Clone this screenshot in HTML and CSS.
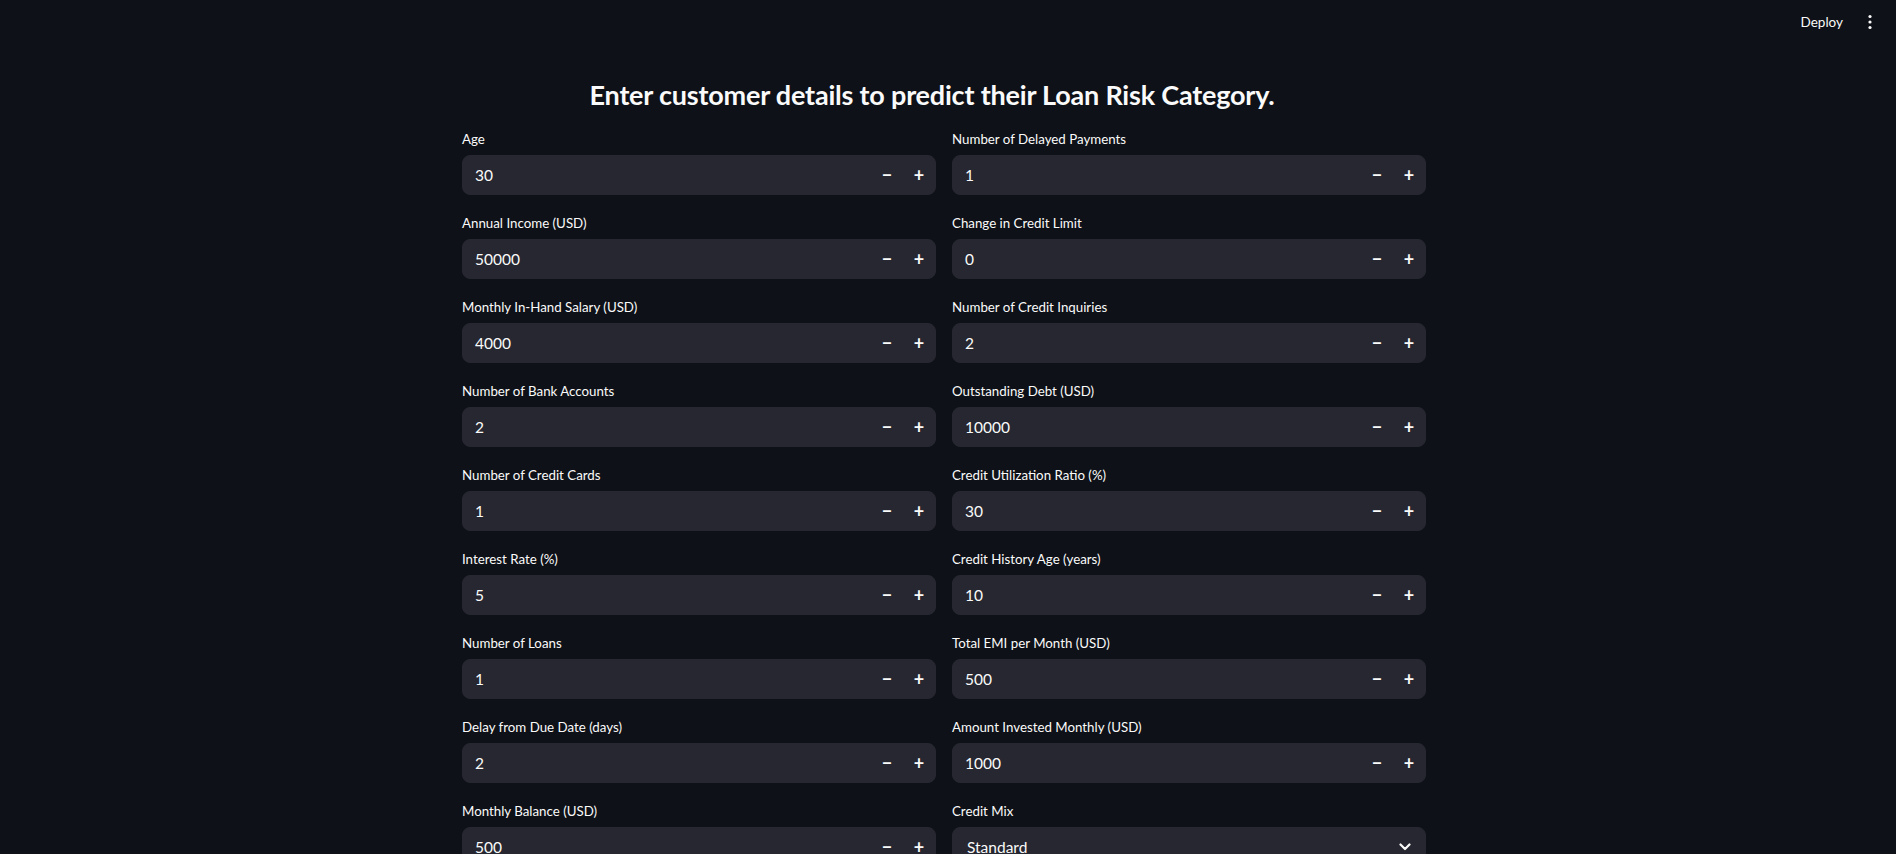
FILE: index.html
```html
<!DOCTYPE html>
<html lang="en">
<head>
<meta charset="utf-8">
<title>Loan Risk Category</title>
<link rel="stylesheet" href="styles.css">
</head>
<body>
<header class="topbar">
  <button class="deploy">Deploy</button>
  <button class="menu" aria-label="Main menu">
    <svg width="16" height="16" viewBox="0 0 16 16"><circle cx="8" cy="2.5" r="1.6" fill="#fafafa"/><circle cx="8" cy="8" r="1.6" fill="#fafafa"/><circle cx="8" cy="13.5" r="1.6" fill="#fafafa"/></svg>
  </button>
</header>
<main class="main">
  <div class="block">
    <h3 class="title">Enter customer details to predict their Loan Risk Category.</h3>
    <div class="grid">
      <div class="field"><label class="label">Age</label><div class="input"><span class="value">30</span><span class="step">&minus;</span><span class="step">+</span></div></div>
      <div class="field"><label class="label">Number of Delayed Payments</label><div class="input"><span class="value">1</span><span class="step">&minus;</span><span class="step">+</span></div></div>

      <div class="field"><label class="label">Annual Income (USD)</label><div class="input"><span class="value">50000</span><span class="step">&minus;</span><span class="step">+</span></div></div>
      <div class="field"><label class="label">Change in Credit Limit</label><div class="input"><span class="value">0</span><span class="step">&minus;</span><span class="step">+</span></div></div>

      <div class="field"><label class="label">Monthly In-Hand Salary (USD)</label><div class="input"><span class="value">4000</span><span class="step">&minus;</span><span class="step">+</span></div></div>
      <div class="field"><label class="label">Number of Credit Inquiries</label><div class="input"><span class="value">2</span><span class="step">&minus;</span><span class="step">+</span></div></div>

      <div class="field"><label class="label">Number of Bank Accounts</label><div class="input"><span class="value">2</span><span class="step">&minus;</span><span class="step">+</span></div></div>
      <div class="field"><label class="label">Outstanding Debt (USD)</label><div class="input"><span class="value">10000</span><span class="step">&minus;</span><span class="step">+</span></div></div>

      <div class="field"><label class="label">Number of Credit Cards</label><div class="input"><span class="value">1</span><span class="step">&minus;</span><span class="step">+</span></div></div>
      <div class="field"><label class="label">Credit Utilization Ratio (%)</label><div class="input"><span class="value">30</span><span class="step">&minus;</span><span class="step">+</span></div></div>

      <div class="field"><label class="label">Interest Rate (%)</label><div class="input"><span class="value">5</span><span class="step">&minus;</span><span class="step">+</span></div></div>
      <div class="field"><label class="label">Credit History Age (years)</label><div class="input"><span class="value">10</span><span class="step">&minus;</span><span class="step">+</span></div></div>

      <div class="field"><label class="label">Number of Loans</label><div class="input"><span class="value">1</span><span class="step">&minus;</span><span class="step">+</span></div></div>
      <div class="field"><label class="label">Total EMI per Month (USD)</label><div class="input"><span class="value">500</span><span class="step">&minus;</span><span class="step">+</span></div></div>

      <div class="field"><label class="label">Delay from Due Date (days)</label><div class="input"><span class="value">2</span><span class="step">&minus;</span><span class="step">+</span></div></div>
      <div class="field"><label class="label">Amount Invested Monthly (USD)</label><div class="input"><span class="value">1000</span><span class="step">&minus;</span><span class="step">+</span></div></div>

      <div class="field"><label class="label">Monthly Balance (USD)</label><div class="input"><span class="value">500</span><span class="step">&minus;</span><span class="step">+</span></div></div>
      <div class="field"><label class="label">Credit Mix</label><div class="input select"><span class="value">Standard</span><span class="chev"><svg width="12" height="8" viewBox="0 0 12 8"><path d="M1.5 1.5 L6 6 L10.5 1.5" fill="none" stroke="#fafafa" stroke-width="2.2" stroke-linecap="round" stroke-linejoin="round"/></svg></span></div></div>
    </div>
  </div>
</main>
</body>
</html>
```

FILE: styles.css
```css
html, body {
  margin: 0;
  padding: 0;
  height: 100%;
  overflow: hidden;
  background: #0e1117;
  color: #fafafa;
  font-family: Lato, "Noto Sans", sans-serif;
}

.topbar {
  height: 43px;
  display: flex;
  align-items: center;
  justify-content: flex-end;
  padding-right: 18px;
  gap: 19px;
}

.deploy, .menu {
  background: transparent;
  border: none;
  color: #fafafa;
  font-family: Lato, "Noto Sans", sans-serif;
  font-size: 13.5px;
  padding: 0;
  cursor: pointer;
}

.menu {
  width: 16px;
  height: 16px;
  display: flex;
}

.main {
  display: flex;
  justify-content: center;
  padding-right: 8px;
}

.block {
  width: 964px;
}

.title {
  margin: 0;
  padding: 32px 24px 12px 0;
  font-size: 27px;
  line-height: 40px;
  font-weight: 700;
  text-align: center;
  letter-spacing: -0.2px;
}

.grid {
  display: grid;
  grid-template-columns: 1fr 1fr;
  column-gap: 16px;
  row-gap: 16px;
}

.field {
  display: flex;
  flex-direction: column;
}

.label {
  height: 24px;
  margin-bottom: 4px;
  display: flex;
  align-items: center;
  font-size: 13.3px;
}

.input {
  height: 40px;
  box-sizing: border-box;
  border: 1px solid #262730;
  border-radius: 8px;
  background: #262730;
  display: flex;
  align-items: center;
}

.value {
  flex: 1;
  padding-left: 12px;
  font-size: 15.5px;
}

.step {
  width: 32px;
  height: 38px;
  display: flex;
  align-items: center;
  justify-content: center;
  font-size: 18px;
  font-weight: 700;
}

.select .value {
  padding-left: 14px;
}

.chev {
  width: 20px;
  display: flex;
  align-items: center;
  justify-content: center;
  margin-right: 10px;
  margin-top: 0;
}
```
